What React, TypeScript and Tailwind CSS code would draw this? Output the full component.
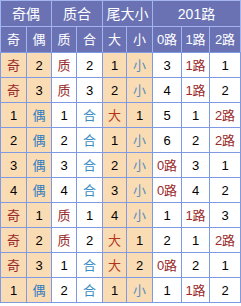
import React from 'react';

type Cell = string;

const headTop = [
  { label: '奇偶', span: 'col-span-2' },
  { label: '质合', span: 'col-span-2' },
  { label: '尾大小', span: 'col-span-2' },
  { label: '201路', span: 'col-span-3' },
];

const headSub = ['奇', '偶', '质', '合', '大', '小', '0路', '1路', '2路'];

const rows: Cell[][] = [
  ['奇', '2', '质', '2', '1', '小', '3', '1路', '1'],
  ['奇', '3', '质', '3', '2', '小', '4', '1路', '2'],
  ['1', '偶', '1', '合', '大', '1', '5', '1', '2路'],
  ['2', '偶', '2', '合', '1', '小', '6', '2', '2路'],
  ['3', '偶', '3', '合', '2', '小', '0路', '3', '1'],
  ['4', '偶', '4', '合', '3', '小', '0路', '4', '2'],
  ['奇', '1', '质', '1', '4', '小', '1', '1路', '3'],
  ['奇', '2', '质', '2', '大', '1', '2', '1', '2路'],
  ['奇', '3', '1', '合', '大', '2', '0路', '2', '1'],
  ['1', '偶', '2', '合', '1', '小', '1', '1路', '2'],
];

const cols = 'grid-cols-[25px_24px_24px_25px_23px_25px_28px_27px_30px]';

// peach on odd/even and big/small columns
const peach = [true, true, false, false, true, true, false, false, false];

function tone(v: string) {
  if (v === '奇' || v === '质' || v.endsWith('路')) return 'text-[#9a2a2a]';
  if (v === '大') return 'text-[#b3341a]';
  if (v === '偶') return 'text-[#2e7bc0]';
  if (v === '合') return 'text-[#3d8dc2]';
  if (v === '小') return 'text-[#5a8fbd]';
  return 'text-black';
}

export default function App() {
  return (
    <div
      className="w-[241px] bg-white text-[13px] leading-none"
      style={{ fontFamily: '"Liberation Sans", "Noto Sans CJK SC", sans-serif' }}
    >
      <div className={`grid ${cols} gap-px bg-[#a3b5ef] px-px pt-px`}>
        {headTop.map((h) => (
          <div key={h.label} className={`${h.span} h-[25px] flex items-center justify-center bg-[#6a72b4] text-white text-[14px]`}>
            {h.label}
          </div>
        ))}
        {headSub.map((h) => (
          <div key={h} className="h-[25px] flex items-center justify-center bg-[#6a72b4] text-white">
            {h}
          </div>
        ))}
      </div>
      <div className={`grid ${cols} gap-px bg-[#7f9ae2] p-px`}>
        {rows.map((row, r) =>
          row.map((v, c) => (
            <div
              key={r + '-' + c}
              className={`h-[24px] flex items-center justify-center ${peach[c] ? 'bg-[#fadcb4]' : 'bg-white'} ${tone(v)}`}
            >
              {v}
            </div>
          ))
        )}
      </div>
    </div>
  );
}
